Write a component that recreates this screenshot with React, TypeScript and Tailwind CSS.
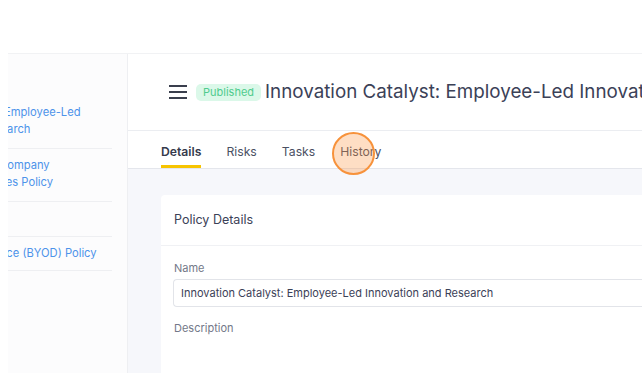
import React from "react";

export default function App() {
  return (
    <div className="w-[642px] h-[383px] bg-white overflow-hidden" style={{ fontFamily: "Inter, 'Noto Sans', sans-serif" }}>
      <div className="h-[54px] bg-white border-b border-[#f1f2f4] ml-[8px]"></div>
      <div className="flex h-[319px]">
        <div className="w-[8px] shrink-0 bg-white"></div>
        <div className="w-[120px] shrink-0 bg-[#fcfcfd] border-r border-[#eeeff2] overflow-hidden flex flex-col pt-[42px]">
          <div className="w-[104px] flex flex-col text-[11.2px] leading-[17px] text-[#4d93ea]">
            <div className="py-[8px] border-b border-[#eeeff2] h-[53px] overflow-hidden whitespace-nowrap">
              <div className="-ml-[4px]">Employee-Led</div>
              <div className="-ml-[27px]">Research</div>
            </div>
            <div className="py-[8px] border-b border-[#eeeff2] h-[53px] overflow-hidden whitespace-nowrap">
              <div className="-ml-[9px]">Company</div>
              <div className="-ml-[32px]">Devices Policy</div>
            </div>
            <div className="border-b border-[#eeeff2] h-[35px]"></div>
            <div className="py-[8px] border-b border-[#eeeff2] h-[34px] overflow-hidden whitespace-nowrap">
              <div className="-ml-[25px]">Device (BYOD) Policy</div>
            </div>
          </div>
        </div>
        <div className="flex-1 flex flex-col min-w-0">
          <div className="h-[77px] shrink-0 bg-white border-b border-[#ebedf1] flex items-center pl-[41px] gap-[9px] whitespace-nowrap overflow-hidden">
            <div className="flex flex-col gap-[4px] w-[18px] shrink-0">
              <div className="h-[2px] bg-[#3a3f4d]"></div>
              <div className="h-[2px] bg-[#3a3f4d]"></div>
              <div className="h-[2px] bg-[#3a3f4d]"></div>
            </div>
            <span className="shrink-0 bg-[#dbf8e9] text-[#4fcb8d] text-[11px] leading-[17px] px-[7px] rounded-[5px]">Published</span>
            <span className="shrink-0 text-[18.8px] text-[#3b4157] -ml-[5px]">Innovation Catalyst: Employee-Led Innovation and Research</span>
          </div>
          <div className="h-[38px] shrink-0 bg-white border-b border-[#e4e6ec] flex pl-[33px] gap-[25px] text-[12.2px] text-[#4a5063] relative">
            <div className="relative flex items-center pt-[5px] font-semibold text-[#353a4c]">
              Details
              <div className="absolute left-0 right-0 bottom-0 h-[3px] bg-[#f7c400]"></div>
            </div>
            <div className="flex items-center pt-[5px]">Risks</div>
            <div className="flex items-center pt-[5px]">Tasks</div>
            <div className="flex items-center pt-[5px] relative">
              History
              <div className="absolute left-[-8px] top-[1px] w-[43px] h-[43px] rounded-full border-2 border-[#f7923b] bg-[#fb923c]/30"></div>
            </div>
          </div>
          <div className="flex-1 bg-[#f6f7fb] pl-[33px] pt-[26px] overflow-hidden">
            <div className="bg-white rounded-tl-[4px] h-full">
              <div className="h-[51px] border-b border-[#f0f1f4] flex items-center pl-[13px] pt-[1px] text-[12.5px] text-[#3b4157]">Policy Details</div>
              <div className="pl-[12px] pt-[14px] flex flex-col">
                <div className="text-[11px] text-[#737888] leading-[16px] pl-[1px]">Name</div>
                <div className="mt-[3px] h-[28px] border border-[#e2e4e9] rounded-l-[4px] border-r-0 flex items-center pl-[7px] text-[11px] text-[#3b4157] whitespace-nowrap">Innovation Catalyst: Employee-Led Innovation and Research</div>
                <div className="mt-[13px] text-[11px] text-[#737888] leading-[16px] pl-[1px]">Description</div>
              </div>
            </div>
          </div>
        </div>
      </div>
    </div>
  );
}
